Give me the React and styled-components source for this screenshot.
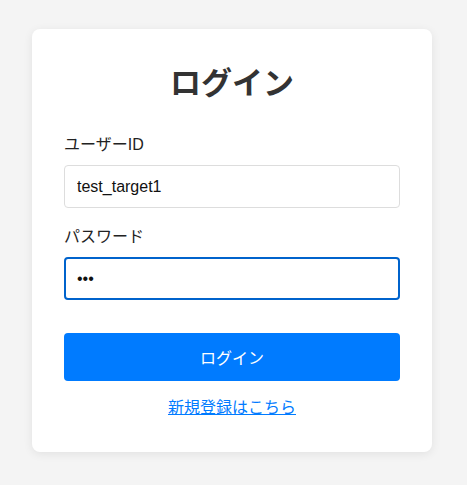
import React from "react";
import styled, { createGlobalStyle } from "styled-components";

const GlobalStyle = createGlobalStyle`
  * {
    box-sizing: border-box;
  }

  body {
    margin: 0;
    background-color: #f4f4f4;
    font-family: "Liberation Sans", "Noto Sans CJK JP", sans-serif;
  }
`;

const Page = styled.div`
  display: flex;
  justify-content: flex-start;
  padding: 29px 35px 33px 32px;
`;

const Card = styled.div`
  width: 400px;
  background: #fff;
  border-radius: 8px;
  box-shadow: 0 2px 10px rgba(0, 0, 0, 0.08);
  padding: 36px 32px 34px;
`;

const Title = styled.h1`
  margin: 0 0 33px;
  font-size: 31px;
  line-height: 37px;
  font-weight: bold;
  color: #333;
  text-align: center;
`;

const Field = styled.div`
  margin-bottom: ${({ $last }) => ($last ? "0" : "19px")};
`;

const Label = styled.label`
  display: block;
  margin-bottom: 10px;
  font-size: 16px;
  line-height: 20px;
  color: #222;
`;

const Input = styled.input`
  display: block;
  width: 100%;
  height: 43px;
  padding: 0 ${({ $active }) => ($active ? "11px" : "12px")};
  font-family: inherit;
  font-size: 16px;
  color: #111;
  background: #fff;
  border: ${({ $active }) => ($active ? "2px solid #0063cc" : "1px solid #ddd")};
  border-radius: 4px;
  outline: none;
`;

const Button = styled.button`
  display: block;
  width: 100%;
  height: 48px;
  margin-top: 33px;
  font-family: inherit;
  font-size: 16px;
  color: #fff;
  background-color: #007bff;
  border: none;
  border-radius: 4px;
  cursor: pointer;

  &:hover {
    background-color: #0069d9;
  }
`;

const Footer = styled.p`
  margin: 17px 0 0;
  text-align: center;
  font-size: 16px;
  line-height: 20px;
`;

const Link = styled.a`
  color: #007bff;
  text-decoration: underline;
`;

const App = () => {
  return (
    <>
      <GlobalStyle />
      <Page>
        <Card>
          <Title>ログイン</Title>
          <Field>
            <Label htmlFor="userId">ユーザーID</Label>
            <Input id="userId" type="text" defaultValue="test_target1" />
          </Field>
          <Field $last>
            <Label htmlFor="password">パスワード</Label>
            <Input id="password" type="password" defaultValue="abc" $active autoFocus />
          </Field>
          <Button type="button">ログイン</Button>
          <Footer>
            <Link href="#register">新規登録はこちら</Link>
          </Footer>
        </Card>
      </Page>
    </>
  );
};

export default App;
